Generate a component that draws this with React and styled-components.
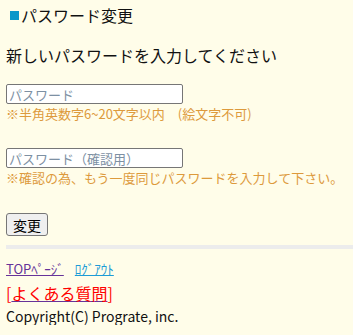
import React from 'react'
import styled, { createGlobalStyle } from 'styled-components'

const Global = createGlobalStyle`
  html, body {
    margin: 0;
    background: #fffde9;
  }
  body {
    font-family: "Noto Sans CJK JP", "DejaVu Sans", sans-serif;
    color: #111;
  }
`

const Page = styled.div`
  padding: 5px 0 0 6px;
`

const Heading = styled.h2`
  margin: 0;
  font-size: 16px;
  font-weight: normal;
  line-height: 20px;
  display: flex;
  align-items: center;
  gap: 2px;
  padding-left: 4px;
  &::before {
    content: '';
    width: 9px;
    height: 9px;
    background: #0a97c9;
  }
`

const Lead = styled.p`
  margin: 20px 0 0;
  font-size: 16px;
  line-height: 20px;
`

const Field = styled.div`
  margin-top: ${p => p.$top}px;
  display: flex;
  flex-direction: column;
  align-items: flex-start;
`

const Input = styled.input`
  box-sizing: border-box;
  width: 177px;
  height: 20px;
  margin: 0;
  padding: 0 2px;
  border: 1px solid #767676;
  border-radius: 2px;
  background: #fff;
  font-family: inherit;
  font-size: 13px;
  &::placeholder {
    color: #7d90a3;
  }
`

const Note = styled.span`
  margin-top: 1px;
  font-size: 13px;
  line-height: 18px;
  color: #dd9a3c;
`

const Button = styled.button`
  margin-top: 26px;
  box-sizing: border-box;
  height: 23px;
  padding: 0 6px;
  border: 1px solid #767676;
  border-radius: 3px;
  background: #efefef;
  font-family: inherit;
  font-size: 14px;
  color: #000;
`

const Divider = styled.div`
  margin: 9px 0 0 6px;
  height: 4px;
  background: #ececec;
`

const Links = styled.div`
  margin-top: 12px;
  display: flex;
  gap: 11px;
  font-size: 13px;
  line-height: 16px;
`

const Link = styled.a`
  color: ${p => (p.$visited ? '#663399' : '#1c9bd6')};
  text-decoration: underline;
`

const Faq = styled.div`
  margin-top: 6px;
  font-size: 16px;
  line-height: 20px;
  color: #f00;
  a {
    color: #663399;
    span {
      color: #f00;
    }
  }
`

const Copy = styled.p`
  margin: 4px 0 0;
  font-size: 14px;
  line-height: 18px;
`

export default function App() {
  return (
    <>
      <Global />
      <Page>
        <Heading>パスワード変更</Heading>
        <Lead>新しいパスワードを入力してください</Lead>
        <Field $top={19}>
          <Input type="password" placeholder="パスワード" />
          <Note>※半角英数字6~20文字以内　(絵文字不可)</Note>
        </Field>
        <Field $top={25}>
          <Input type="password" placeholder="パスワード（確認用）" />
          <Note>※確認の為、もう一度同じパスワードを入力して下さい。</Note>
        </Field>
        <Button>変更</Button>
      </Page>
      <Divider />
      <Page style={{ paddingTop: 0 }}>
        <Links>
          <Link $visited href="#top">TOPﾍﾟｰｼﾞ</Link>
          <Link href="#logout">ﾛｸﾞｱｳﾄ</Link>
        </Links>
        <Faq>[<a href="#faq"><span>よくある質問</span></a>]</Faq>
        <Copy>Copyright(C) Prograte, inc.</Copy>
      </Page>
    </>
  )
}
